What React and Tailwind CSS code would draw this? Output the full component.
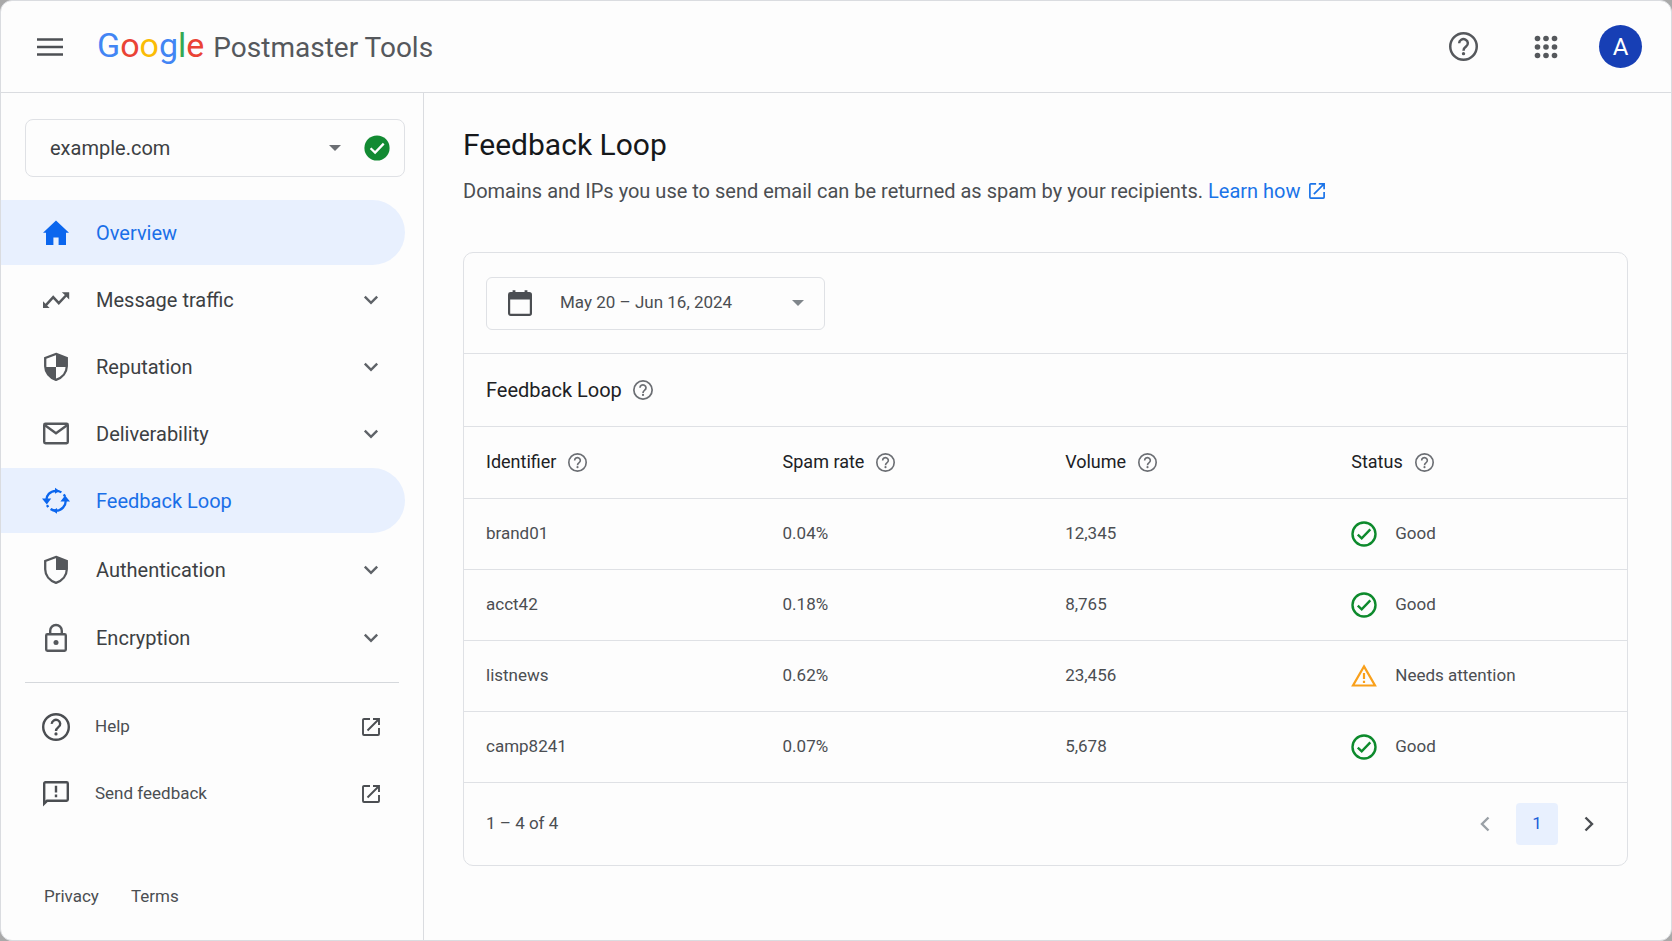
import React from 'react';

const strokeProps = { fill: 'none', stroke: 'currentColor', strokeWidth: 2.4 };

function HelpIcon({ className = '' }) {
  return (
    <svg viewBox="0 0 28 28" className={`shrink-0 ${className}`} aria-hidden="true" {...strokeProps}>
      <circle cx="14" cy="14" r="12.8" />
      <path d="M9.8 10.9a4.2 4 0 1 1 6.6 3.2c-1.5 1.1-2.4 1.8-2.4 4" />
      <circle cx="14" cy="20.9" r="1.6" fill="currentColor" stroke="none" />
    </svg>
  );
}

function ExternalIcon({ className = '' }) {
  return (
    <svg viewBox="0 0 18 18" className={`shrink-0 ${className}`} aria-hidden="true" fill="none" stroke="currentColor" strokeWidth="1.9">
      <path d="M8 1H2a1 1 0 0 0-1 1v14a1 1 0 0 0 1 1h14a1 1 0 0 0 1-1v-6" />
      <path d="M11 1h6v6M17 1 5.5 12.5" />
    </svg>
  );
}

function ChevronDown() {
  return (
    <svg viewBox="0 0 16 16" className="size-4 shrink-0 text-[#5f6368]" aria-hidden="true" {...strokeProps}>
      <path d="m1.8 4.6 6.2 6.2 6.2-6.2" />
    </svg>
  );
}

function Caret({ className = '' }) {
  return (
    <svg viewBox="0 0 12 6" className={`h-[6px] w-3 ${className}`} aria-hidden="true" fill="currentColor">
      <path d="M0 0h12L6 6z" />
    </svg>
  );
}

function HomeIcon() {
  return (
    <svg viewBox="0 0 28 28" className="size-7 shrink-0" aria-hidden="true" fill="currentColor">
      <path d="M14 1.6 27 13.8h-3V26h-7.4v-7.6h-5.2V26H4V13.8H1z" />
    </svg>
  );
}

function TrafficIcon() {
  return (
    <svg viewBox="0 0 28 28" className="size-7 shrink-0" aria-hidden="true" fill="none" stroke="currentColor" strokeWidth="2.5">
      <path d="M3.5 19.6 11.2 11.2l5.6 6L24.5 9" />
      <path d="M19.8 6.2h7.4v7.2l-2.3-2.2-2.6-2.6z" fill="currentColor" stroke="none" />
      <path d="M1 15.2V22h6.6l-2-2L3 17.3z" fill="currentColor" stroke="none" />
    </svg>
  );
}

function ShieldIcon({ half = false }) {
  return (
    <svg viewBox="0 0 28 30" className="h-[30px] w-7 shrink-0" aria-hidden="true">
      <path d="M14 1.9 24.8 6v8.3c0 6-4.3 11.3-10.8 13.6C7.5 25.6 3.2 20.3 3.2 14.3V6z" fill="none" stroke="currentColor" strokeWidth="2.3" />
      <path d="M14 1.5 25 6v9H14z" fill="currentColor" />
      {!half && <path d="M3 15h11v13C7.8 25.8 3.4 21 3 15z" fill="currentColor" />}
    </svg>
  );
}

function MailIcon() {
  return (
    <svg viewBox="0 0 28 28" className="size-7 shrink-0" aria-hidden="true" {...strokeProps}>
      <rect x="2.2" y="3.7" width="23.6" height="19.6" rx="1.2" />
      <path d="m2.6 5 11.4 8.2L25.4 5" />
    </svg>
  );
}

function LoopIcon() {
  return (
    <svg viewBox="0 0 28 28" className="size-7 shrink-0" aria-hidden="true" fill="none" stroke="currentColor" strokeWidth="2.3">
      <path d="M4.2 13.5c0-5 3.6-9.4 9.8-9.7 2.2 0 3.9.6 5.4 1.6" />
      <path d="M23.8 13.5c0 5.4-4.2 10.2-9.8 10.2-2.1 0-3.9-.6-5.4-1.7" />
      <path d="M21.8 7.4l1.2 1.9M6.2 20.1 5 18.2" />
      <path d="M0 11.6h9.2L4.8 17.6zM28 14.6h-9.6l4.7-6z" fill="currentColor" stroke="none" />
      <path d="m13 .8 4.3 3L13 6.8zM15 20.9l-4.3 2.9L15 26.8z" fill="currentColor" stroke="none" />
    </svg>
  );
}

function LockIcon() {
  return (
    <svg viewBox="0 0 28 30" className="h-[30px] w-7 shrink-0" aria-hidden="true" {...strokeProps}>
      <rect x="4.2" y="11.2" width="19.6" height="16.6" rx="1.2" />
      <path d="M8.2 11V7.8a5.8 5.8 0 0 1 11.6 0V11" />
      <circle cx="14" cy="19.5" r="2.5" fill="currentColor" stroke="none" />
    </svg>
  );
}

function FeedbackIcon() {
  return (
    <svg viewBox="0 0 28 28" className="size-7 shrink-0" aria-hidden="true" {...strokeProps}>
      <path d="M2.2 23.6V3.4a1.2 1.2 0 0 1 1.2-1.2h21.2a1.2 1.2 0 0 1 1.2 1.2v16.2a1.2 1.2 0 0 1-1.2 1.2H5z" />
      <path d="M14 5.8v6.6M14 14.6v2.6" />
    </svg>
  );
}

function CalendarIcon() {
  return (
    <svg viewBox="0 0 26 28" className="h-7 w-[26px] shrink-0" aria-hidden="true">
      <rect x="2.1" y="4.1" width="21.8" height="21.8" rx="1.6" fill="none" stroke="currentColor" strokeWidth="2.2" />
      <path d="M2 4h22v6.6H2zM5.6 1.2h2.8V5H5.6zM17.6 1.2h2.8V5h-2.8z" fill="currentColor" />
    </svg>
  );
}

function GoodIcon() {
  return (
    <svg viewBox="0 0 26 26" className="size-[26px] shrink-0 text-[#0d8a2c]" aria-hidden="true" {...strokeProps}>
      <circle cx="13" cy="13" r="11.5" />
      <path d="m6.8 13.6 3.9 3.8 8.6-9" />
    </svg>
  );
}

function WarningIcon() {
  return (
    <svg viewBox="0 0 26 26" className="size-[26px] shrink-0 text-[#f9a01b]" aria-hidden="true" fill="none" stroke="currentColor" strokeWidth="2.2">
      <path d="M13 3.4 24 22.5H2z" />
      <path d="M13 10v6M13 17.8V20" />
    </svg>
  );
}

const mainNav = [
  { label: 'Overview', icon: <HomeIcon />, active: true },
  { label: 'Message traffic', icon: <TrafficIcon /> },
  { label: 'Reputation', icon: <ShieldIcon /> },
  { label: 'Deliverability', icon: <MailIcon /> },
  { label: 'Feedback Loop', icon: <LoopIcon />, active: true },
];

const securityNav = [
  { label: 'Authentication', icon: <ShieldIcon half /> },
  { label: 'Encryption', icon: <LockIcon /> },
];

const columns = ['Identifier', 'Spam rate', 'Volume', 'Status'];

const rows = [
  { id: 'brand01', rate: '0.04%', volume: '12,345', status: 'Good' },
  { id: 'acct42', rate: '0.18%', volume: '8,765', status: 'Good' },
  { id: 'listnews', rate: '0.62%', volume: '23,456', status: 'Needs attention' },
  { id: 'camp8241', rate: '0.07%', volume: '5,678', status: 'Good' },
];

function NavItem({ label, icon, active }) {
  if (active) {
    return (
      <li>
        <a href="#" className="flex h-[65px] items-center gap-[26px] rounded-r-full bg-[#e8f0fe] pl-[41px] text-xl text-[#1a6fe8]">
          <span className="text-[#0b66ee]">{icon}</span>
          {label}
        </a>
      </li>
    );
  }
  return (
    <li>
      <button type="button" aria-expanded="false" className="flex h-[65px] w-full items-center gap-[26px] pr-[26px] pl-[41px] text-left text-xl text-[#3c4043]">
        <span className="text-[#55585c]">{icon}</span>
        <span className="flex-1">{label}</span>
        <ChevronDown />
      </button>
    </li>
  );
}

function SupportLink({ label, icon }) {
  return (
    <a href="#" className="flex h-[67px] items-center gap-[25px] pr-[25px] pl-[41px] text-[17px] text-[#4b4e52]">
      {icon}
      <span className="flex-1">{label}</span>
      <ExternalIcon className="size-[18px]" />
    </a>
  );
}

function Header() {
  return (
    <header className="flex h-[92px] shrink-0 items-center border-b border-[#dadce0] pr-[29px] pl-[35px]">
      <button type="button" aria-label="Main menu" className="text-[#4d5054]">
        <svg viewBox="0 0 28 28" className="size-7" aria-hidden="true" {...strokeProps}>
          <path d="M1 6.5h26M1 14h26M1 21.5h26" />
        </svg>
      </button>
      <a href="#" className="ml-[33px] flex items-baseline gap-[9px]">
        <span className="text-[34px] leading-10">
          <span className="text-[#4285f4]">G</span>
          <span className="text-[#ea4335]">o</span>
          <span className="text-[#fbbc05]">o</span>
          <span className="text-[#4285f4]">g</span>
          <span className="text-[#34a853]">l</span>
          <span className="text-[#ea4335]">e</span>
        </span>
        <span className="text-[28px] leading-10 text-[#55585c]">Postmaster Tools</span>
      </a>
      <div className="ml-auto flex items-center">
        <button type="button" aria-label="Help" className="text-[#55585c]">
          <HelpIcon className="size-[29px]" />
        </button>
        <button type="button" aria-label="Google apps" className="ml-[54px] text-[#55585c]">
          <svg viewBox="0 0 28 28" className="size-7" aria-hidden="true" fill="currentColor">
            {[5.5, 14, 22.5].map((cy) =>
              [5.5, 14, 22.5].map((cx) => <circle key={`${cx}-${cy}`} cx={cx} cy={cy} r="2.8" />)
            )}
          </svg>
        </button>
        <button type="button" aria-label="Account" className="ml-[39px] size-[43px] rounded-full bg-[#173fb5] text-2xl text-white">
          A
        </button>
      </div>
    </header>
  );
}

function Sidebar() {
  return (
    <aside className="flex w-[423px] shrink-0 flex-col border-r border-[#dadce0] pt-[26px] pr-[18px]">
      <div className="relative ml-6">
        <select aria-label="Domain" className="h-[58px] w-full appearance-none rounded-lg border border-[#dfe1e5] bg-transparent pl-6 text-xl text-[#3c4043]">
          <option>example.com</option>
        </select>
        <div className="pointer-events-none absolute inset-y-0 right-[15px] flex items-center gap-[23px]">
          <Caret className="text-[#6b6e73]" />
          <svg viewBox="0 0 26 26" className="size-[26px]" aria-hidden="true">
            <circle cx="13" cy="13" r="12.6" fill="#128a32" />
            <path d="m6.6 13.2 4.5 4.4 8.6-9" fill="none" stroke="#fff" strokeWidth="2.3" />
          </svg>
        </div>
      </div>
      <nav className="mt-[23px]">
        <ul className="flex flex-col gap-[2px]">
          {mainNav.map((item) => (
            <NavItem key={item.label} {...item} />
          ))}
        </ul>
        <ul className="mt-1 flex flex-col gap-[3px]">
          {securityNav.map((item) => (
            <NavItem key={item.label} {...item} />
          ))}
        </ul>
      </nav>
      <hr className="mt-3 mr-[6px] ml-6 border-[#d5d8dc]" />
      <div className="mt-[10px]">
        <SupportLink label="Help" icon={<HelpIcon className="size-7" />} />
        <SupportLink label="Send feedback" icon={<FeedbackIcon />} />
      </div>
      <footer className="mt-auto flex gap-8 pb-8 pl-[43px] text-[17px] leading-6 text-[#4b4e52]">
        <a href="#">Privacy</a>
        <a href="#">Terms</a>
      </footer>
    </aside>
  );
}

function FeedbackCard() {
  return (
    <section className="mt-[49px] rounded-[10px] border border-[#dfe1e5]">
      <div className="flex h-[101px] items-center border-b border-[#dfe1e5] px-[22px]">
        <button type="button" aria-haspopup="dialog" className="flex h-[53px] w-[339px] items-center rounded-md border border-[#dfe1e5] px-5 text-[17px] text-[#4b4e52]">
          <CalendarIcon />
          <span className="ml-[27px] flex-1 text-left">May 20 – Jun 16, 2024</span>
          <Caret className="text-[#80868b]" />
        </button>
      </div>
      <h2 className="flex h-[73px] items-center gap-[11px] border-b border-[#dfe1e5] px-[22px] text-xl text-[#202124]">
        Feedback Loop
        <HelpIcon className="size-5 text-[#6b6e73]" />
      </h2>
      <table className="w-full table-fixed text-left text-[17px]">
        <colgroup>
          <col className="w-[25.5%]" />
          <col className="w-[24.3%]" />
          <col className="w-[24.6%]" />
          <col />
        </colgroup>
        <thead>
          <tr className="h-[71px] border-b border-[#dfe1e5] text-lg text-[#202124]">
            {columns.map((column) => (
              <th key={column} scope="col" className="p-0 pl-[22px] font-normal">
                <span className="flex items-center gap-3">
                  {column}
                  <HelpIcon className="size-[19px] text-[#6b6e73]" />
                </span>
              </th>
            ))}
          </tr>
        </thead>
        <tbody className="text-[#4b4e52]">
          {rows.map((row) => (
            <tr key={row.id} className="h-[71px] border-b border-[#dfe1e5]">
              <td className="pl-[22px]">{row.id}</td>
              <td className="pl-[22px]">{row.rate}</td>
              <td className="pl-[22px]">{row.volume}</td>
              <td className="pl-[22px]">
                <span className="flex items-center gap-[18px]">
                  {row.status === 'Good' ? <GoodIcon /> : <WarningIcon />}
                  {row.status}
                </span>
              </td>
            </tr>
          ))}
        </tbody>
      </table>
      <div className="flex h-[82px] items-center justify-between pr-[30px] pl-[22px] text-[17px] text-[#4b4e52]">
        <span>1 – 4 of 4</span>
        <nav aria-label="Pagination" className="flex items-center gap-[23px]">
          <button type="button" aria-label="Previous page" className="text-[#9aa0a6]">
            <svg viewBox="0 0 16 16" className="size-4" aria-hidden="true" {...strokeProps}>
              <path d="M11.5 1.5 5 8l6.5 6.5" />
            </svg>
          </button>
          <button type="button" aria-current="page" className="size-[42px] rounded bg-[#e8f0fe] text-[#1a5fd8]">
            1
          </button>
          <button type="button" aria-label="Next page" className="text-[#4b4e52]">
            <svg viewBox="0 0 16 16" className="size-4" aria-hidden="true" {...strokeProps}>
              <path d="M4.5 1.5 11 8l-6.5 6.5" />
            </svg>
          </button>
        </nav>
      </div>
    </section>
  );
}

export default function App() {
  return (
    <div className="flex min-h-screen bg-[#a9a9a9] font-['Roboto',sans-serif]">
      <div className="flex flex-1 flex-col rounded-xl border border-[#dadce0] bg-[#fdfdfd]">
        <Header />
        <div className="flex flex-1">
          <Sidebar />
          <main className="flex-1 pt-8 pr-[43px] pb-8 pl-[39px]">
            <h1 className="text-[30px] leading-10 text-[#16181b]">Feedback Loop</h1>
            <p className="mt-[14px] text-xl leading-6 text-[#4b4e52]">
              Domains and IPs you use to send email can be returned as spam by your recipients.{' '}
              <a href="#" className="inline-flex items-center gap-2 text-[#1a73e8]">
                Learn how
                <ExternalIcon className="size-4" />
              </a>
            </p>
            <FeedbackCard />
          </main>
        </div>
      </div>
    </div>
  );
}
